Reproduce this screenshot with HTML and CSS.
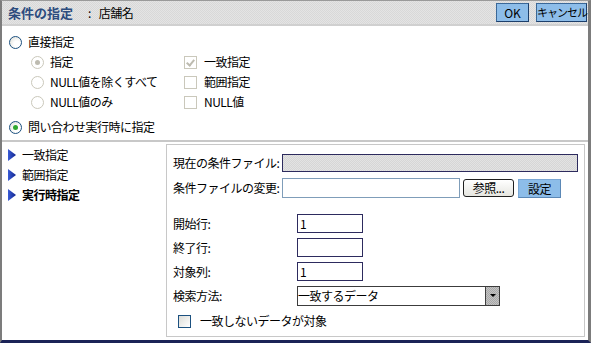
FILE: index.html
```html
<!DOCTYPE html>
<html lang="ja">
<head>
    <meta charset="UTF-8">
    <meta name="viewport" content="width=device-width, initial-scale=1.0">
    <title>条件の指定</title>
    <link rel="stylesheet" href="styles.css">
</head>
<body>

    <div class="dialog">

        <div class="titlebar">
            <span class="title">条件の指定</span>
            <span class="colon">:</span>
            <span class="field-name">店舗名</span>
            <div class="actions">
                <button type="button" class="btn btn-ok">OK</button>
                <button type="button" class="btn btn-cancel">キャンセル</button>
            </div>
        </div>

        <div class="mode">
            <label class="opt"><input type="radio" name="mode">直接指定</label>

            <div class="direct">
                <label class="opt"><input type="radio" name="direct" checked disabled>指定</label>
                <label class="opt opt-check"><input type="checkbox" checked disabled>一致指定</label>
                <label class="opt"><input type="radio" name="direct" disabled>NULL値を除くすべて</label>
                <label class="opt opt-check"><input type="checkbox" disabled>範囲指定</label>
                <label class="opt"><input type="radio" name="direct" disabled>NULL値のみ</label>
                <label class="opt opt-check"><input type="checkbox" disabled>NULL値</label>
            </div>

            <label class="opt opt-last"><input type="radio" name="mode" checked>問い合わせ実行時に指定</label>
        </div>

        <div class="main">
            <ul class="nav">
                <li><svg class="arrow" width="8" height="12" viewBox="0 0 8 12"><defs><linearGradient id="ag" x1="0" y1="0" x2="1" y2="0"><stop offset="0" stop-color="#3a5cd8"/><stop offset="1" stop-color="#10228a"/></linearGradient></defs><polygon points="0,0 8,6 0,12" fill="url(#ag)"/></svg>一致指定</li>
                <li><svg class="arrow" width="8" height="12" viewBox="0 0 8 12"><polygon points="0,0 8,6 0,12" fill="url(#ag)"/></svg>範囲指定</li>
                <li class="current"><svg class="arrow" width="8" height="12" viewBox="0 0 8 12"><polygon points="0,0 8,6 0,12" fill="url(#ag)"/></svg>実行時指定</li>
            </ul>

            <div class="panel">
                <div class="row">
                    <span class="label">現在の条件ファイル:</span>
                    <input type="text" class="input-current" readonly>
                </div>
                <div class="row row-change">
                    <span class="label">条件ファイルの変更:</span>
                    <input type="text" class="input-file">
                    <button type="button" class="btn-browse">参照...</button>
                    <button type="button" class="btn btn-set">設定</button>
                </div>

                <div class="params">
                    <span class="label">開始行:</span>
                    <input type="text" class="input-num" value="1">
                    <span class="label">終了行:</span>
                    <input type="text" class="input-num">
                    <span class="label">対象列:</span>
                    <input type="text" class="input-num" value="1">
                    <span class="label">検索方法:</span>
                    <div class="select">
                        <select>
                            <option>一致するデータ</option>
                            <option>一致しないデータ</option>
                        </select>
                        <span class="select-btn"></span>
                    </div>
                </div>

                <label class="opt opt-invert"><input type="checkbox">一致しないデータが対象</label>
            </div>
        </div>

    </div>

</body>
</html>
```

FILE: styles.css
```css
body {
    margin: 0;
    padding: 0;
    background-color: #fff;
    font-family: "Noto Sans CJK JP", "Liberation Sans", sans-serif;
    font-size: 12px;
    line-height: 14px;
    letter-spacing: -0.5px;
    color: #000;
}

.dialog {
    width: 591px;
    height: 343px;
    box-sizing: border-box;
    border-top: 1px solid #9a9a9a;
    border-left: 2px solid #7c7c7c;
    border-right: 3px solid #7c7c7c;
    border-bottom: 3px solid #1b2357;
    display: flex;
    flex-direction: column;
    background-color: #fff;
}

/* title bar */
.titlebar {
    height: 23px;
    display: flex;
    align-items: center;
    padding: 0 1px 0 6px;
    border-bottom: 2px solid #d0d0d0;
    background: repeating-conic-gradient(#d8d8d8 0 25%, #e4e4e4 0 50%) 0 0 / 2px 2px;
}

.title {
    font-size: 13px;
    font-weight: bold;
    letter-spacing: 0;
    color: #2d4c7e;
}

.colon {
    margin-left: 15px;
}

.field-name {
    margin-left: 8px;
}

.actions {
    margin-left: auto;
    display: flex;
    gap: 7px;
}

.btn {
    height: 19px;
    padding: 0;
    font-family: inherit;
    font-size: 12px;
    line-height: 15px;
    letter-spacing: -0.5px;
    white-space: nowrap;
    color: #000;
    background-color: #8dbde9;
    border: 1px solid #3a6898;
    border-right-color: #1d3f6b;
    border-bottom-color: #1d3f6b;
    cursor: pointer;
}

.btn-ok {
    width: 33px;
    letter-spacing: 0;
}

.btn-cancel {
    width: 51px;
    font-size: 11px;
    letter-spacing: -1px;
}

/* mode section */
.mode {
    padding: 6px 0 3px 7px;
    border-bottom: 2px solid #c8c8c8;
}

.opt {
    display: flex;
    align-items: center;
    gap: 6px;
    height: 20px;
}

.opt-check {
    gap: 7px;
}

.opt-last {
    margin-top: 5px;
}

.direct {
    display: grid;
    grid-template-columns: 153px auto;
    grid-auto-rows: 20px;
    margin-left: 22px;
}

.opt input {
    appearance: none;
    -webkit-appearance: none;
    margin: 0;
    width: 13px;
    height: 13px;
    box-sizing: border-box;
    position: relative;
    flex: none;
}

.opt input[type="radio"] {
    border: 1px solid #1c5180;
    border-radius: 50%;
    background: radial-gradient(circle at 65% 65%, #fff 0, #fff 30%, #dcdcd4 100%);
}

.opt input[type="radio"]:checked::after {
    content: "";
    position: absolute;
    left: 3px;
    top: 3px;
    width: 5px;
    height: 5px;
    border-radius: 50%;
    background-color: #2fa82f;
}

.opt input[type="radio"]:disabled {
    border-color: #cac8bb;
    background: #fff;
}

.opt input[type="radio"]:disabled:checked::after {
    background-color: #bdbbb0;
}

.opt input[type="checkbox"] {
    border: 1px solid #1c5180;
    background: linear-gradient(135deg, #dcdcd7, #fff);
}

.opt input[type="checkbox"]:disabled {
    border-color: #cac8bb;
    background: #fff;
}

.opt input[type="checkbox"]:checked::after {
    content: "";
    position: absolute;
    left: 3px;
    top: 1px;
    width: 3px;
    height: 6px;
    border-right: 2px solid #bdbbb0;
    border-bottom: 2px solid #bdbbb0;
    transform: rotate(40deg);
}

/* lower part */
.main {
    flex: 1;
    display: flex;
}

.nav {
    list-style: none;
    margin: 0;
    padding: 3px 0 0 6px;
    width: 158px;
}

.nav li {
    display: flex;
    align-items: center;
    gap: 6px;
    height: 20px;
}

.nav li.current {
    font-weight: bold;
}

.arrow {
    flex: none;
}

.panel {
    flex: 1;
    margin: 2px 3px 3px 0;
    padding: 9px 0 0 6px;
    border: 1px solid #c8c8c8;
}

.row {
    display: flex;
    align-items: center;
}

.row-change {
    margin-top: 6px;
}

.label {
    width: 109px;
    flex: none;
    white-space: nowrap;
}

.panel input[type="text"] {
    margin: 0;
    padding: 0 2px;
    box-sizing: border-box;
    font-family: inherit;
    font-size: 12px;
    color: #000;
}

.input-current {
    width: 296px;
    height: 18px;
    border: 1px solid #2d2b5e;
    background: repeating-conic-gradient(#d6d6d6 0 25%, #e3e3e3 0 50%) 0 0 / 2px 2px;
}

.input-file {
    width: 178px;
    height: 20px;
    border: 1px solid #7f9db9;
    background-color: #fff;
}

.btn-browse {
    margin-left: 3px;
    width: 51px;
    height: 18px;
    padding: 0;
    font-family: inherit;
    font-size: 12px;
    line-height: 14px;
    letter-spacing: -0.5px;
    color: #000;
    border: 1px solid #1f1f1f;
    border-radius: 3px;
    background: linear-gradient(#ffffff, #e6e6e0);
}

.btn-set {
    margin-left: 4px;
    width: 43px;
    height: 19px;
    border-color: #7aa7d4;
    border-right-color: #5b88b6;
    border-bottom-color: #5b88b6;
}

.params {
    display: grid;
    grid-template-columns: 124px auto;
    grid-auto-rows: 19px;
    row-gap: 5px;
    align-items: center;
    margin-top: 16px;
}

.params .label {
    width: auto;
}

.input-num {
    width: 66px;
    height: 19px;
    border: 1px solid #2d2b5e;
    background-color: #fff;
}

.select {
    display: flex;
    width: 203px;
    height: 20px;
    box-sizing: border-box;
    border: 1px solid #3c3c3c;
    background-color: #fff;
}

.select select {
    appearance: none;
    -webkit-appearance: none;
    flex: 1;
    min-width: 0;
    margin: 0;
    padding: 0;
    border: none;
    outline: none;
    background: transparent;
    font-family: inherit;
    font-size: 12px;
    letter-spacing: -0.5px;
    color: #000;
}

.select-btn {
    width: 13px;
    flex: none;
    border-left: 1px solid #404040;
    background: repeating-conic-gradient(#a8a8a8 0 25%, #c4c4c4 0 50%) 0 0 / 2px 2px;
    display: flex;
    align-items: center;
    justify-content: center;
}

.select-btn::before {
    content: "";
    border-left: 3px solid transparent;
    border-right: 3px solid transparent;
    border-top: 3px solid #000;
}

.opt-invert {
    margin: 6px 0 0 5px;
    gap: 9px;
}
```
